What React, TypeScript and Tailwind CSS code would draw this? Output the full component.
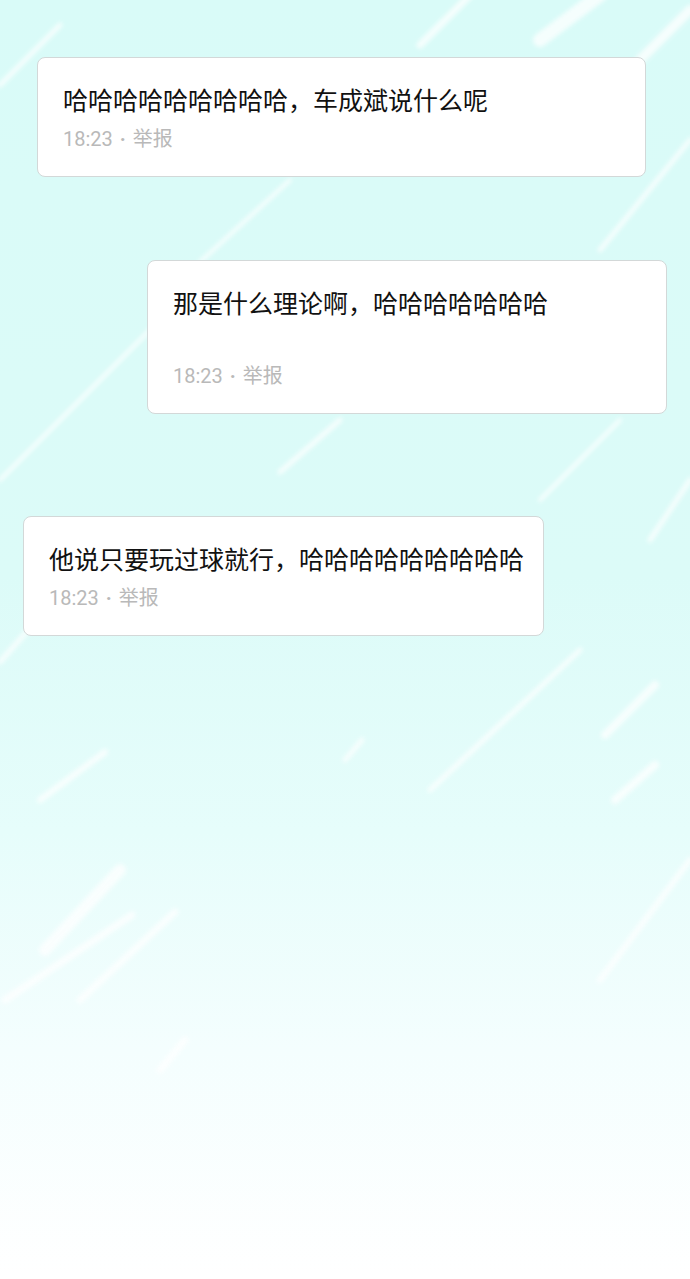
import React from 'react';

type Msg = { id: number; text: string; box: string; tall?: boolean };

const messages: Msg[] = [
  { id: 1, text: '哈哈哈哈哈哈哈哈哈，车成斌说什么呢', box: 'ml-[37px] w-[609px]' },
  { id: 2, text: '那是什么理论啊，哈哈哈哈哈哈哈', box: 'ml-[147px] w-[520px] mt-[83px]', tall: true },
  { id: 3, text: '他说只要玩过球就行，哈哈哈哈哈哈哈哈哈', box: 'ml-[23px] w-[521px] mt-[102px]' },
];

// decorative white streaks drawn over the pale background
const streaks: [number, number, number, number, number][] = [
  [470, -5, 420, 45, 7],
  [600, -5, 540, 40, 14],
  [690, 10, 640, 60, 10],
  [60, 25, 0, 85, 5],
  [290, 180, 200, 262, 4],
  [690, 140, 600, 250, 5],
  [150, 330, 0, 480, 4],
  [340, 420, 280, 472, 5],
  [620, 420, 540, 500, 4],
  [690, 480, 650, 540, 5],
  [30, 628, 0, 662, 5],
  [580, 650, 430, 790, 5],
  [655, 685, 605, 735, 8],
  [105, 752, 40, 800, 6],
  [362, 740, 345, 760, 5],
  [655, 765, 615, 800, 8],
  [120, 870, 45, 950, 12],
  [132, 915, 5, 1000, 7],
  [175, 912, 80, 1000, 7],
  [185, 1040, 160, 1070, 7],
  [690, 860, 600, 980, 6],
];

const Card: React.FC<{ msg: Msg }> = ({ msg }) => (
  <div className={`${msg.box} bg-white border border-[#d3d8d8] rounded-[8px] pt-[24px] pb-[22px] px-[25px]`}>
    <div className="text-[25px] leading-[34px] text-[#111111] whitespace-nowrap">{msg.text}</div>
    {msg.tall && <div className="h-[34px]" />}
    <div
      className="mt-[8px] text-[20px] leading-[30px] text-[#b9b9b9]"
      style={{ fontFamily: 'Roboto, "Noto Sans CJK SC", sans-serif' }}
    >
      18:23<span className="mx-[7px] font-bold">·</span>举报
    </div>
  </div>
);

export default function App() {
  return (
    <div
      className="relative w-[690px] h-[1279px] overflow-hidden bg-[linear-gradient(180deg,#d9fbf8_0%,#dcfbf8_45%,#e6fdfb_65%,#f4fefe_82%,#ffffff_100%)]"
      style={{ fontFamily: '"Noto Sans CJK SC", "Noto Sans", sans-serif' }}
    >
      <svg className="absolute inset-0 pointer-events-none" width="690" height="1279">
        <defs>
          <filter id="soft" x="-20%" y="-20%" width="140%" height="140%">
            <feGaussianBlur stdDeviation="2" />
          </filter>
        </defs>
        <g filter="url(#soft)" stroke="#ffffff" strokeLinecap="round" opacity="0.75">
          {streaks.map(([x1, y1, x2, y2, w], i) => (
            <line key={i} x1={x1} y1={y1} x2={x2} y2={y2} strokeWidth={w} />
          ))}
        </g>
      </svg>
      <div className="relative flex flex-col pt-[57px]">
        {messages.map((m) => (
          <Card key={m.id} msg={m} />
        ))}
      </div>
    </div>
  );
}
